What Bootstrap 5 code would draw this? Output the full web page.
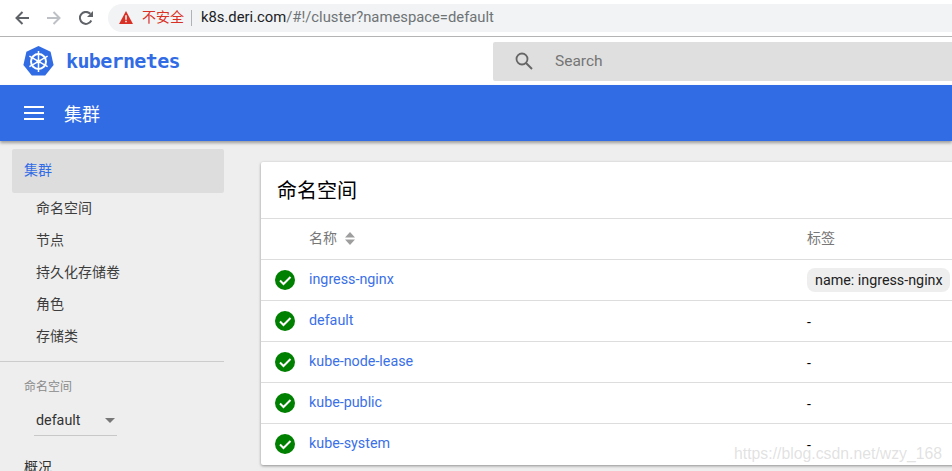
<!DOCTYPE html>
<html lang="zh">
<head>
<meta charset="utf-8">
<title>Kubernetes Dashboard</title>
<link href="https://cdn.jsdelivr.net/npm/bootstrap@5.3.0/dist/css/bootstrap.min.css" rel="stylesheet">
<style>
html,body{height:471px;overflow:hidden}
body{width:952px;background:#eee;font-family:Roboto,"Noto Sans CJK SC",sans-serif;font-size:14px;color:#000}
.chrome-bar{height:37px;background:#fff;border-bottom:1px solid #b4b4b4;padding-left:15px}
.chrome-btn{width:14px;height:14px;flex:none;display:block}
.nav-gap{margin-right:18px}
.addr{height:28px;margin-top:-1px;margin-left:15px;background:#f1f3f4;border-radius:14px 0 0 14px;padding-left:11px;font-size:14.8px}
.addr-warn{color:#d93025;font-size:14px;margin-left:9px}
.addr-sep{width:1px;height:16px;background:#b0b2b5;margin:0 9px 0 7px}
.addr-host{color:#202124}
.addr-path{color:#6f7376}
.kube-head{height:48px;background:#fff;padding-left:23px}
.kube-word{font-family:"DejaVu Sans Mono","Liberation Mono",monospace;font-weight:700;font-size:20px;letter-spacing:-.65px;color:#326ce5;margin-left:12px;line-height:1}
.search-box{width:459px;height:39px;margin-left:auto;background:#dfdfdf;border-radius:2px 0 0 2px;padding-left:22px;color:#757575;font-size:15.500px}
.search-box span{margin-left:22px;padding-top:2px}
.blue-bar{height:56px;background:#326ce5;color:#fff;padding-left:24px;font-size:18px;box-shadow:0 2px 3px rgba(0,0,0,.35);position:relative}
.blue-bar span{margin-left:20px;padding-top:2px}
.page-body{height:330px;overflow:hidden}
.side{width:224px;flex:none;padding-top:8px;font-size:14px}
.side-active{margin-left:12px;margin-bottom:-1px;height:44px;background:#ddd;border-radius:2px;color:#326ce5;padding:0 0 2px 12px}
.side-sub{height:32px;padding-left:36px;color:#3d3d3d}
.side-rule{border-top:1px solid #ccc;margin-top:9px}
.side-cap{color:#8a8a8a;font-size:12px;padding-left:24px;margin-top:16px;line-height:18px}
.ns-pick{width:83px;height:32px;margin:8px 0 0 34px;padding:2px 0 0 2px;border-bottom:1px solid #c8c8c8;color:#333;font-size:14.300px}
.ns-caret{width:0;height:0;border-left:5px solid transparent;border-right:5px solid transparent;border-top:5px solid #777;margin-left:auto;margin-right:2px}
.side-over{padding-left:24px;color:#333;margin-top:21px;line-height:20px}
.main-area{flex:1;min-width:0;padding:21px 0 0 37px}
.ns-panel{width:700px;height:303px;background:#fff;border-radius:2px 0 0 2px;box-shadow:0 1px 3px rgba(0,0,0,.4)}
.panel-title{height:57px;padding-left:16px;font-size:20px;color:#000;border-bottom:1px solid #ddd;padding-top:1px}
.tbl-row{height:41px;border-bottom:1px solid #ddd}
.tbl-row:last-child{border-bottom:0;padding-bottom:1px}
.cell-icon{width:48px;flex:none;padding-left:14px}
.cell-icon svg{display:block}
.cell-name{width:498px;flex:none;color:#3a70e8;font-size:14.300px}
.head-row{color:#777;font-size:14px;padding-bottom:1px}
.cell-label{flex:1;white-space:nowrap}
.chip{display:inline-block;height:24px;line-height:24px;background:#eee;border-radius:8px;padding:0 7px 0 8px;font-size:14.300px;color:#212121}
.dash{font-size:14px;padding-top:2px}
.sort-ic{margin-left:8px}
.wm{position:absolute;left:734px;top:442px;color:rgba(190,190,190,.45);font-size:15.800px;font-family:"Liberation Sans",sans-serif;white-space:nowrap}
</style>
</head>
<body>
<div class="chrome-bar d-flex align-items-center">
  <svg class="chrome-btn nav-gap" viewBox="1 1 14 14"><path d="M15 8H3M8.500 2 2.500 8l6 6" fill="none" stroke="#5f6368" stroke-width="2"/></svg>
  <svg class="chrome-btn nav-gap" viewBox="1 1 14 14"><path d="M1 8h12M7.500 2l6 6-6 6" fill="none" stroke="#bdc1c6" stroke-width="2"/></svg>
  <svg class="chrome-btn" viewBox="1 1 14 14"><path d="M13.300 10.500A6 6 0 1 1 12.300 3.800" fill="none" stroke="#5f6368" stroke-width="2"/><path d="M15 1v6H9z" fill="#5f6368"/></svg>
  <div class="addr flex-fill d-flex align-items-center">
    <svg width="14" height="13" viewBox="0 0 15 14"><path d="M7.500 0 15 14H0z" fill="#d93025"/><path d="M6.700 4.500h1.600v5H6.700zM6.700 10.500h1.600v1.700H6.700z" fill="#fff"/></svg>
    <span class="addr-warn">不安全</span><span class="addr-sep"></span>
    <span><span class="addr-host">k8s.deri.com</span><span class="addr-path">/#!/cluster?namespace=default</span></span>
  </div>
</div>
<div class="kube-head d-flex align-items-center">
  <svg width="31" height="31" viewBox="0 0 31 31"><path d="M15.500 0 27.600 5.800 30.600 19 22.200 29.500H8.800L.4 19 3.400 5.800z" fill="#326ce5"/><g fill="none" stroke="#fff"><circle cx="15.500" cy="15.500" r="7.500" stroke-width="2"/><path d="M15.500 5v21M6.400 10.200l18.200 10.500M24.600 10.200 6.400 20.700" stroke-width="1.500"/></g><circle cx="15.500" cy="15.500" r="2" fill="#fff"/></svg>
  <span class="kube-word">kubernetes</span>
  <div class="search-box d-flex align-items-center">
    <svg width="18" height="18" viewBox="0 0 18 18"><circle cx="7" cy="7" r="5.500" fill="none" stroke="#666" stroke-width="1.800"/><path d="m11 11 6 6" stroke="#666" stroke-width="2"/></svg>
    <span>Search</span>
  </div>
</div>
<div class="blue-bar d-flex align-items-center">
  <svg width="20" height="14" viewBox="0 0 20 14"><path d="M0 1h20M0 7h20M0 13h20" stroke="#fff" stroke-width="2"/></svg>
  <span>集群</span>
</div>
<div class="page-body d-flex">
  <div class="side">
    <div class="side-active d-flex align-items-center">集群</div>
    <div class="side-sub d-flex align-items-center">命名空间</div>
    <div class="side-sub d-flex align-items-center">节点</div>
    <div class="side-sub d-flex align-items-center">持久化存储卷</div>
    <div class="side-sub d-flex align-items-center">角色</div>
    <div class="side-sub d-flex align-items-center">存储类</div>
    <div class="side-rule"></div>
    <div class="side-cap">命名空间</div>
    <div class="ns-pick d-flex align-items-center">default<span class="ns-caret"></span></div>
    <div class="side-over">概况</div>
  </div>
  <div class="main-area">
    <div class="ns-panel">
      <div class="panel-title d-flex align-items-center">命名空间</div>
      <div class="tbl-row head-row d-flex align-items-center"><div class="cell-icon"></div><div class="cell-name head-row d-flex align-items-center">名称<svg class="sort-ic" width="10" height="13" viewBox="0 0 10 13"><path d="M5 0l5 5.500H0zM5 13 0 7.500h10z" fill="#9e9e9e"/></svg></div><div class="cell-label">标签</div></div>
      <div class="tbl-row d-flex align-items-center"><div class="cell-icon"><svg width="20" height="20" viewBox="0 0 20 20"><circle cx="10" cy="10" r="10" fill="#008000"/><path d="m5 10.500 3.500 3.500L15.500 7" fill="none" stroke="#fff" stroke-width="2"/></svg></div><div class="cell-name">ingress-nginx</div><div class="cell-label"><span class="chip">name: ingress-nginx</span></div></div>
      <div class="tbl-row d-flex align-items-center"><div class="cell-icon"><svg width="20" height="20" viewBox="0 0 20 20"><circle cx="10" cy="10" r="10" fill="#008000"/><path d="m5 10.500 3.500 3.500L15.500 7" fill="none" stroke="#fff" stroke-width="2"/></svg></div><div class="cell-name">default</div><div class="cell-label dash">-</div></div>
      <div class="tbl-row d-flex align-items-center"><div class="cell-icon"><svg width="20" height="20" viewBox="0 0 20 20"><circle cx="10" cy="10" r="10" fill="#008000"/><path d="m5 10.500 3.500 3.500L15.500 7" fill="none" stroke="#fff" stroke-width="2"/></svg></div><div class="cell-name">kube-node-lease</div><div class="cell-label dash">-</div></div>
      <div class="tbl-row d-flex align-items-center"><div class="cell-icon"><svg width="20" height="20" viewBox="0 0 20 20"><circle cx="10" cy="10" r="10" fill="#008000"/><path d="m5 10.500 3.500 3.500L15.500 7" fill="none" stroke="#fff" stroke-width="2"/></svg></div><div class="cell-name">kube-public</div><div class="cell-label dash">-</div></div>
      <div class="tbl-row d-flex align-items-center"><div class="cell-icon"><svg width="20" height="20" viewBox="0 0 20 20"><circle cx="10" cy="10" r="10" fill="#008000"/><path d="m5 10.500 3.500 3.500L15.500 7" fill="none" stroke="#fff" stroke-width="2"/></svg></div><div class="cell-name">kube-system</div><div class="cell-label dash">-</div></div>
    </div>
  </div>
</div>
<div class="wm">https://blog.csdn.net/wzy_168</div>
<script src="https://cdn.jsdelivr.net/npm/bootstrap@5.3.0/dist/js/bootstrap.bundle.min.js"></script>
</body>
</html>
